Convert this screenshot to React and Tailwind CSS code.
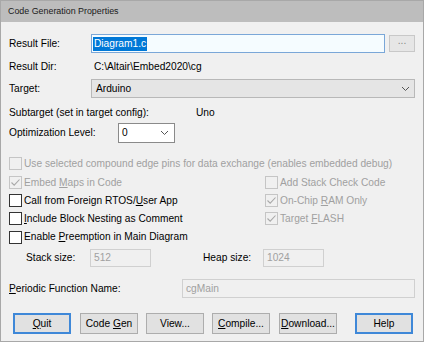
import React from "react";

const font = { fontFamily: '"Liberation Sans", Arial, sans-serif' };

function Check({ checked, disabled, children, className = "" }) {
  return (
    <div className={`flex items-center ${className}`}>
      <div
        className={`w-[13px] h-[13px] border flex items-center justify-center shrink-0 ${
          disabled ? "border-[#c5c5c5] bg-[#f0f0f0]" : "border-[#333] bg-white"
        }`}
      >
        {checked && (
          <svg width="11" height="11" viewBox="0 0 11 11">
            <path d="M1.5 5.5 L4.2 8.2 L9.5 2.5" fill="none" stroke={disabled ? "#a8a8a8" : "#222"} strokeWidth="1.1" />
          </svg>
        )}
      </div>
      <span className={`ml-[2px] whitespace-nowrap ${disabled ? "text-[#a0a0a0]" : "text-black"}`}>{children}</span>
    </div>
  );
}

function Chevron() {
  return (
    <svg width="9" height="6" viewBox="0 0 9 6">
      <path d="M1 1 L4.5 4.5 L8 1" fill="none" stroke="#555" strokeWidth="1" />
    </svg>
  );
}

function Btn({ children, def, w = "w-[58px]" }) {
  return (
    <div
      className={`${w} h-[21px] flex items-center justify-center bg-[#e1e1e1] ${
        def ? "border-2 border-[#3f88d8]" : "border border-[#adadad]"
      }`}
    >
      <span className="whitespace-nowrap">{children}</span>
    </div>
  );
}

export default function App() {
  return (
    <div
      className="w-[424px] h-[342px] bg-[#f0f0f0] border border-[#a8a8a8] flex flex-col text-[10.2px] text-black overflow-hidden"
      style={font}
    >
      <div className="h-[21px] bg-[#bdbdbd] flex items-center pl-[7px] text-[8.9px] text-[#1a1a1a] shrink-0">
        Code Generation Properties
      </div>

      <div className="mt-[12px] h-[19px] flex items-center pl-[8px]">
        <span className="w-[82px]">Result File:</span>
        <div className="w-[294px] h-[19px] border border-[#7aa7d8] bg-[#f5fcff] flex items-center pl-[1px]">
          <span className="bg-[#0078d7] text-white px-[1px] leading-[14px]">Diagram1.c</span>
        </div>
        <div className="ml-[4px] w-[26px] h-[17px] border border-[#c8c8c8] bg-[#e6e6e6] flex items-center justify-center text-[#888] leading-none pb-[4px]">
          ...
        </div>
      </div>

      <div className="mt-[5px] h-[18px] flex items-center pl-[8px]">
        <span className="w-[85px]">Result Dir:</span>
        <span>C:\Altair\Embed2020\cg</span>
      </div>

      <div className="mt-[3px] h-[19px] flex items-center pl-[8px]">
        <span className="w-[82px]">Target:</span>
        <div className="w-[324px] h-[19px] border border-[#b8b8b8] bg-[#e5e5e5] flex items-center justify-between pl-[4px] pr-[4px]">
          <span>Arduino</span>
          <Chevron />
        </div>
      </div>

      <div className="mt-[6px] h-[18px] flex items-center pl-[8px]">
        <span className="w-[187px]">Subtarget (set in target config):</span>
        <span>Uno</span>
      </div>

      <div className="mt-[1px] h-[20px] flex items-center pl-[8px]">
        <span className="w-[109px]">Optimization Level:</span>
        <div className="w-[57px] h-[20px] border border-[#8a8a8a] bg-white flex items-center justify-between pl-[3px] pr-[5px]">
          <span>0</span>
          <Chevron />
        </div>
      </div>

      <div className="mt-[11px] pl-[8px] flex flex-col">
        <Check disabled className="h-[19px]">
          Use selected compound edge pins for data exchange (enables embedded debug)
        </Check>
        <div className="h-[19px] flex items-center">
          <Check checked disabled className="w-[256px]">
            Embed <u>M</u>aps in Code
          </Check>
          <Check disabled>Add Stack Check Code</Check>
        </div>
        <div className="h-[18px] flex items-center">
          <Check className="w-[256px]">
            Call from Foreign RTOS/<u>U</u>ser App
          </Check>
          <Check checked disabled>
            On-Chip <u>R</u>AM Only
          </Check>
        </div>
        <div className="h-[18px] flex items-center">
          <Check className="w-[256px]">
            <u>I</u>nclude Block Nesting as Comment
          </Check>
          <Check checked disabled>
            Target <u>F</u>LASH
          </Check>
        </div>
        <Check className="h-[18px]">
          Enable <u>P</u>reemption in Main Diagram
        </Check>
      </div>

      <div className="mt-[3px] h-[18px] flex items-center pl-[25px]">
        <span className="w-[64px]">Stack size:</span>
        <div className="w-[61px] h-[18px] border border-[#d0d0d0] bg-[#f0f0f0] flex items-center pl-[3px] text-[#a0a0a0]">
          512
        </div>
        <span className="ml-[52px] w-[60px]">Heap size:</span>
        <div className="w-[61px] h-[18px] border border-[#d0d0d0] bg-[#f0f0f0] flex items-center pl-[3px] text-[#a0a0a0]">
          1024
        </div>
      </div>

      <div className="mt-[12px] h-[19px] flex items-center pl-[8px]">
        <span className="w-[173px]">
          <u>P</u>eriodic Function Name:
        </span>
        <div className="w-[233px] h-[19px] border border-[#d0d0d0] bg-[#f0f0f0] flex items-center pl-[3px] text-[#a0a0a0]">
          cgMain
        </div>
      </div>

      <div className="mt-[15px] flex items-center pl-[12px]">
        <Btn def>
          <u>Q</u>uit
        </Btn>
        <div className="ml-[9px]">
          <Btn>
            Code <u>G</u>en
          </Btn>
        </div>
        <div className="ml-[8px]">
          <Btn>View...</Btn>
        </div>
        <div className="ml-[8px]">
          <Btn>
            <u>C</u>ompile...
          </Btn>
        </div>
        <div className="ml-[9px]">
          <Btn>
            <u>D</u>ownload...
          </Btn>
        </div>
        <div className="ml-[18px]">
          <Btn def>Help</Btn>
        </div>
      </div>
    </div>
  );
}
